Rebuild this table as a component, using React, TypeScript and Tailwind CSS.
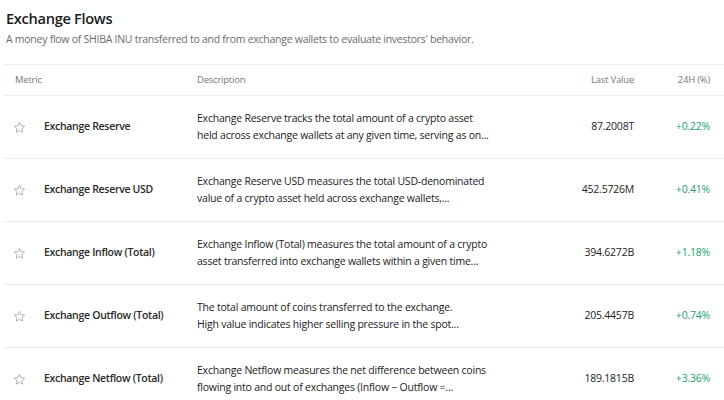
import { FC } from 'react'

interface Row {
    name: string
    desc: [string, string]
    value: string
    change: string
}

const rows: Row[] = [
    {
        name: 'Exchange Reserve',
        desc: [
            'Exchange Reserve tracks the total amount of a crypto asset',
            'held across exchange wallets at any given time, serving as on...',
        ],
        value: '87.2008T',
        change: '+0.22%',
    },
    {
        name: 'Exchange Reserve USD',
        desc: [
            'Exchange Reserve USD measures the total USD-denominated',
            'value of a crypto asset held across exchange wallets,...',
        ],
        value: '452.5726M',
        change: '+0.41%',
    },
    {
        name: 'Exchange Inflow (Total)',
        desc: [
            'Exchange Inflow (Total) measures the total amount of a crypto',
            'asset transferred into exchange wallets within a given time...',
        ],
        value: '394.6272B',
        change: '+1.18%',
    },
    {
        name: 'Exchange Outflow (Total)',
        desc: [
            'The total amount of coins transferred to the exchange.',
            'High value indicates higher selling pressure in the spot...',
        ],
        value: '205.4457B',
        change: '+0.74%',
    },
    {
        name: 'Exchange Netflow (Total)',
        desc: [
            'Exchange Netflow measures the net difference between coins',
            'flowing into and out of exchanges (Inflow − Outflow =...',
        ],
        value: '189.1815B',
        change: '+3.36%',
    },
]

const Star: FC = () => (
    <svg width="13" height="13" viewBox="0 0 24 24" fill="none" stroke="#a3a3a3" strokeWidth="1.5" strokeLinejoin="round">
        <path d="M12 2.5l2.9 6.1 6.6.8-4.9 4.6 1.3 6.6L12 17.3l-5.9 3.3 1.3-6.6-4.9-4.6 6.6-.8z" />
    </svg>
)

const App: FC = () => (
    <div className="h-[400px] w-[724px] overflow-hidden bg-white font-['Open_Sans',sans-serif] text-[#222]">
        <div className="px-[6px] pt-[6px]">
            <h1 className="text-[14.6px] leading-[24px] font-semibold tracking-[-0.3px] text-[#1a1a1a]">Exchange Flows</h1>
            <p className="mt-[1px] text-[10.5px] leading-[16px] tracking-[-0.26px] text-[#6b6b6b]">
                A money flow of SHIBA INU transferred to and from exchange wallets to evaluate investors&apos; behavior.
            </p>
        </div>
        <div className="mt-[17px] ml-[4px] text-[10.5px] tracking-[-0.22px]">
            <div className="flex h-[32px] items-center border-y border-[#ececec] pr-[14px] text-[9.5px] text-[#777]">
                <div className="w-[193px] pl-[11px]">Metric</div>
                <div className="flex-1">Description</div>
                <div className="w-[140px] text-right">Last Value</div>
                <div className="w-[76px] text-right">24H (%)</div>
            </div>
            {rows.map(r => (
                <div key={r.name} className="flex h-[63px] items-center border-b border-[#ececec] pr-[14px]">
                    <div className="flex w-[193px] items-center">
                        <div className="flex w-[40px] pl-[9px] pt-[1px]">
                            <Star />
                        </div>
                        <span className="font-semibold tracking-[-0.3px] text-[#2a2a2a]">{r.name}</span>
                    </div>
                    <div className="flex-1 leading-[17px]">
                        <div>{r.desc[0]}</div>
                        <div>{r.desc[1]}</div>
                    </div>
                    <div className="w-[140px] text-right">{r.value}</div>
                    <div className="w-[76px] text-right text-[#22a06b]">{r.change}</div>
                </div>
            ))}
        </div>
    </div>
)

export default App
